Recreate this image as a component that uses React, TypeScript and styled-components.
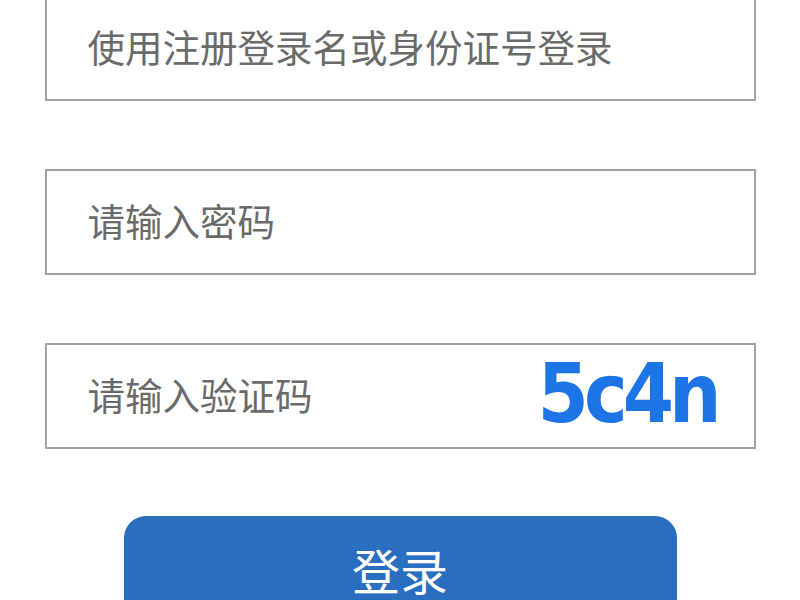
import styled, { createGlobalStyle } from "styled-components";

const GlobalStyle = createGlobalStyle`
  html, body {
    margin: 0;
    padding: 0;
    background: #ffffff;
    overflow: hidden;
  }
  body {
    font-family: "Noto Sans CJK SC", "Noto Sans", sans-serif;
  }
`;

const Form = styled.form`
  display: flex;
  flex-direction: column;
  align-items: center;
  gap: 68px;
  width: 800px;
  margin-top: -5px;
`;

const Field = styled.label`
  box-sizing: border-box;
  display: flex;
  align-items: center;
  justify-content: space-between;
  width: 711px;
  height: 106px;
  padding: 0 37px 5px 41px;
  border: 2px solid #a3a3a3;
  background: #fff;
`;

const Input = styled.input`
  flex: 1;
  min-width: 0;
  border: none;
  outline: none;
  background: transparent;
  font-family: "Noto Sans CJK SC", sans-serif;
  font-size: 37.5px;
  color: #333;
  padding: 0;

  &::placeholder {
    color: #6a6a6a;
  }
`;

const Captcha = styled.span`
  font-family: "DejaVu Sans Condensed", "DejaVu Sans", sans-serif;
  font-stretch: condensed;
  font-weight: 700;
  font-size: 82px;
  letter-spacing: -5px;
  line-height: 1;
  color: #1c74e6;
  margin-top: 0;
`;

const Submit = styled.button`
  width: 553px;
  height: 120px;
  margin-top: -1px;
  border: none;
  border-radius: 22px;
  background: #2a6ebf;
  color: #fff;
  font-family: "Noto Sans CJK SC", sans-serif;
  font-size: 48px;
  display: flex;
  justify-content: center;
  align-items: flex-start;
  padding-top: 18px;
  cursor: pointer;
`;

export default function App() {
  return (
    <>
      <GlobalStyle />
      <Form onSubmit={(e) => e.preventDefault()}>
        <Field>
          <Input placeholder="使用注册登录名或身份证号登录" />
        </Field>
        <Field>
          <Input type="password" placeholder="请输入密码" />
        </Field>
        <Field>
          <Input placeholder="请输入验证码" />
          <Captcha>5c4n</Captcha>
        </Field>
        <Submit type="submit">登录</Submit>
      </Form>
    </>
  );
}
